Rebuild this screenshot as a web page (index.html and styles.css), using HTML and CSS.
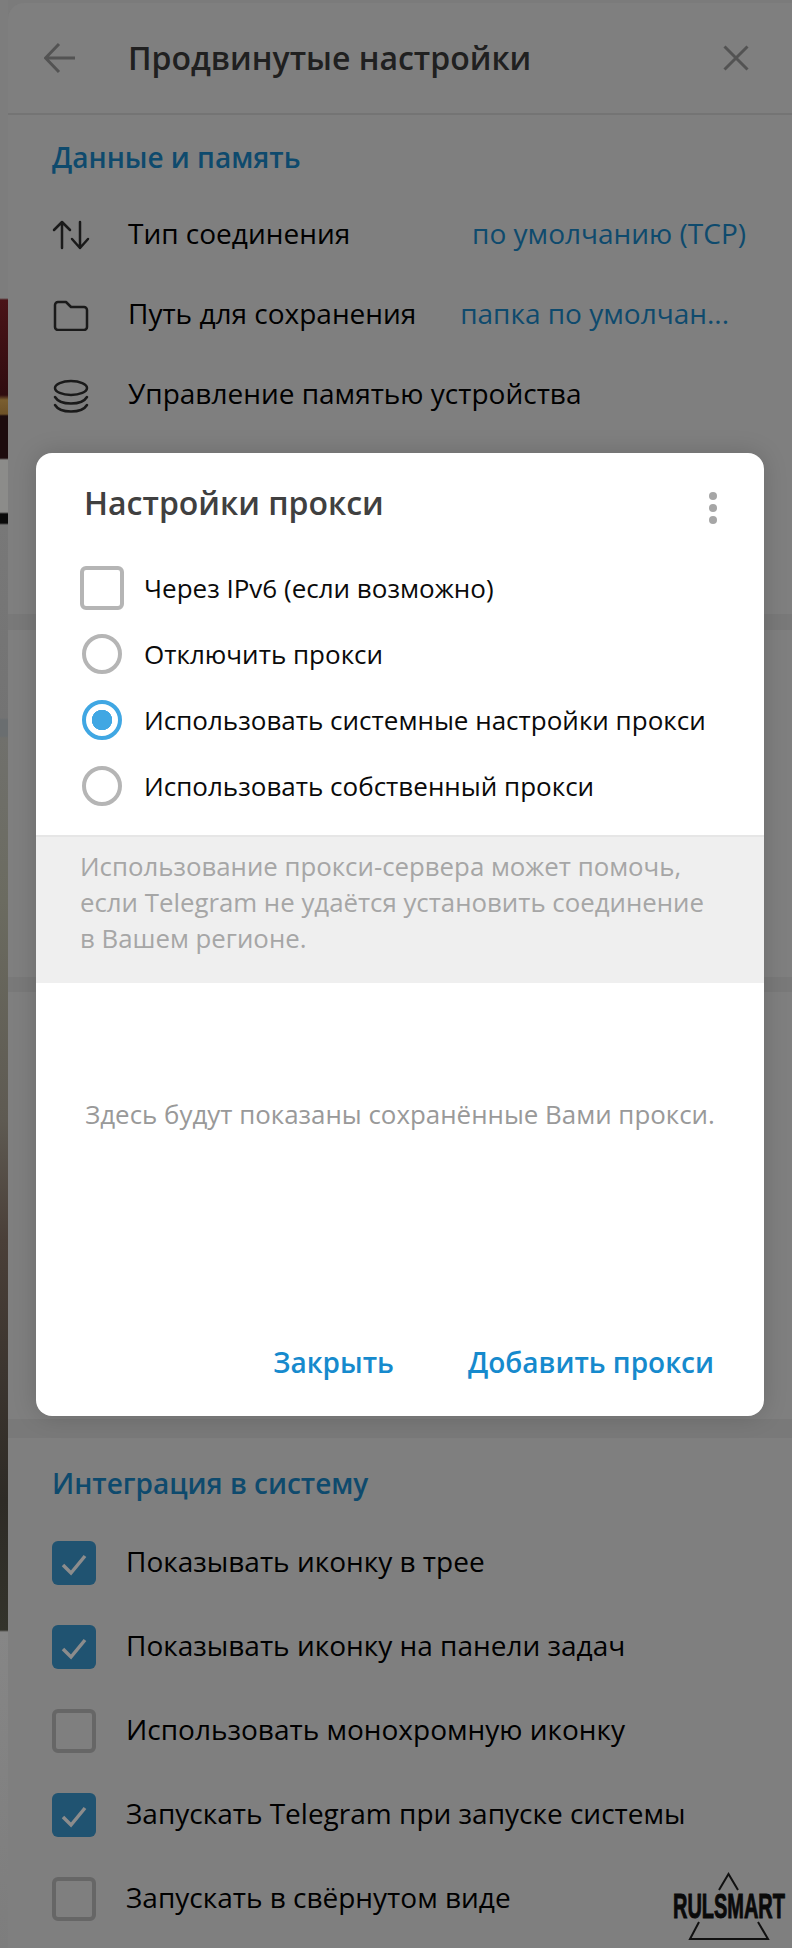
FILE: index.html
```html
<!DOCTYPE html>
<html lang="ru">
<head>
  <meta charset="UTF-8" />
  <meta name="viewport" content="width=device-width, initial-scale=1" />
  <title>Настройки прокси</title>
  <link rel="stylesheet" href="styles.css">
</head>
<body>

  <!-- Полоска окна за панелью -->
  <div class="tira-fondo"></div>

  <div class="panel">
    <header class="panel-cabecera">
      <svg class="icono-atras" width="32" height="32" viewBox="0 0 32 32"><path d="M31 16H2M15 2 1.5 16 15 30" /></svg>
      <h1>Продвинутые настройки</h1>
      <svg class="icono-cerrar" width="26" height="26" viewBox="0 0 26 26"><path d="M1.5 1.5l23 23M24.5 1.5l-23 23" /></svg>
    </header>

    <section class="seccion seccion-datos">
      <h2>Данные и память</h2>
      <div class="fila">
        <svg class="icono" width="38" height="30" viewBox="0 0 38 30"><path d="M10 28V2M2 10l8-8 8 8M28 2v26M20 19l8 9 8-9" /></svg>
        <span class="etiqueta">Тип соединения</span>
        <span class="etiqueta valor">по умолчанию (TCP)</span>
      </div>
      <div class="fila">
        <svg class="icono" width="38" height="32" viewBox="0 0 38 32"><path d="M3 6a3 3 0 0 1 3-3h8l5 5h13a3 3 0 0 1 3 3v17a3 3 0 0 1-3 3H6a3 3 0 0 1-3-3z" /></svg>
        <span class="etiqueta">Путь для сохранения</span>
        <span class="etiqueta valor valor-corto">папка по умолчан...</span>
      </div>
      <div class="fila">
        <svg class="icono" width="38" height="36" viewBox="0 0 38 36"><ellipse cx="19" cy="11" rx="16" ry="7" /><path d="M3 20c3 5 9 6.500 16 6.500S32 25 35 20M3 28c3 5 9 6.500 16 6.500S32 33 35 28" /></svg>
        <span class="etiqueta">Управление памятью устройства</span>
      </div>
    </section>
    <div class="separador"></div>
    <section class="seccion seccion-medio"></section>
    <div class="separador separador-2"></div>
    <section class="seccion seccion-oculta"></section>
    <div class="separador separador-3"></div>

    <section class="seccion seccion-sistema">
      <h2>Интеграция в систему</h2>
      <div class="fila-check">
        <span class="check activo"><svg width="44" height="44" viewBox="0 0 44 44"><path d="M11 24l8 8 14-17" /></svg></span>
        <span class="etiqueta">Показывать иконку в трее</span>
      </div>
      <div class="fila-check">
        <span class="check activo"><svg width="44" height="44" viewBox="0 0 44 44"><path d="M11 24l8 8 14-17" /></svg></span>
        <span class="etiqueta">Показывать иконку на панели задач</span>
      </div>
      <div class="fila-check">
        <span class="check"></span>
        <span class="etiqueta">Использовать монохромную иконку</span>
      </div>
      <div class="fila-check">
        <span class="check activo"><svg width="44" height="44" viewBox="0 0 44 44"><path d="M11 24l8 8 14-17" /></svg></span>
        <span class="etiqueta">Запускать Telegram при запуске системы</span>
      </div>
      <div class="fila-check">
        <span class="check"></span>
        <span class="etiqueta">Запускать в свёрнутом виде</span>
      </div>
    </section>
  </div>

  <!-- Ventana de proxy -->
  <div class="modal">
    <div class="modal-cabecera">
      <h3>Настройки прокси</h3>
      <div class="puntos"><i></i><i></i><i></i></div>
    </div>
    <div class="opciones">
      <div class="opcion"><span class="caja"></span>Через IPv6 (если возможно)</div>
      <div class="opcion"><span class="radio"></span>Отключить прокси</div>
      <div class="opcion"><span class="radio marcado"></span>Использовать системные настройки прокси</div>
      <div class="opcion"><span class="radio"></span>Использовать собственный прокси</div>
    </div>
    <p class="aviso">Использование прокси-сервера может помочь, если Telegram не удаётся установить соединение в Вашем регионе.</p>
    <div class="vacio">Здесь будут показаны сохранённые Вами прокси.</div>
    <div class="modal-pie">
      <span class="boton">Закрыть</span>
      <span class="boton">Добавить прокси</span>
    </div>
  </div>

  <!-- Marca de agua -->
  <div class="marca">
    <svg width="112" height="70" viewBox="0 0 112 70"><path d="M46 18 55.500 2 65 18M26 50 17 67H95L85 50" /></svg>
    <span>RULSMART</span>
  </div>

</body>
</html>
```

FILE: styles.css
```css
:root {
  --color-panel: #7f7f7f;
  --color-banda: #797979;
  --color-azul-titulo: #0e4a6d;
  --color-azul-check: #205371;
  --color-azul: #168acd;
  --color-radio: #b5b5b5;
}

* {
  margin: 0;
  padding: 0;
  box-sizing: border-box;
}

body {
  font-family: 'Open Sans', sans-serif;
  font-size: 26px;
  color: #000;
  width: 792px;
  height: 1948px;
  overflow: hidden;
  position: relative;
  display: flex;
  background: #7b7b7b;
}

.tira-fondo {
  width: 8px;
  flex-shrink: 0;
  background: linear-gradient(to bottom,
    #7d7d7d 0, #7d7d7d 298px,
    #4a1418 300px, #300c10 395px,
    #7a5e30 400px, #6e5228 414px,
    #1d0c0e 416px, #1d0c0e 458px,
    #8c8c8a 460px, #8c8c8a 512px,
    #0a0a0a 514px, #0a0a0a 523px,
    #787878 525px, #737373 718px,
    #6a6e70 720px, #6a6e70 736px,
    #70706c 738px, #6b6b60 900px,
    #5e5a52 1120px, #4a3f38 1240px,
    #2e2b26 1500px, #33332b 1630px,
    #868686 1632px, #7d7d7d 1948px);
}

.panel {
  flex: 1;
  margin-top: 3px;
  font-size: 28px;
  background: var(--color-panel);
  border-top-left-radius: 16px;
  display: flex;
  flex-direction: column;
}

.panel-cabecera {
  height: 112px;
  flex-shrink: 0;
  display: flex;
  align-items: center;
  padding-left: 36px;
  border-bottom: 2px solid #747474;
}

.panel-cabecera h1 {
  font-size: 32px;
  font-weight: 600;
  color: #202020;
  margin: 0 0 2px 52px;
}

.icono-atras,
.icono-cerrar {
  fill: none;
  stroke: #535353;
  stroke-width: 3;
}

.icono-cerrar {
  margin-left: auto;
  margin-right: 43px;
}

.seccion h2 {
  font-size: 28px;
  font-weight: 600;
  color: var(--color-azul-titulo);
  height: 36px;
  line-height: 36px;
  margin: 24px 0 20px 44px;
}

.seccion-datos {
  height: 499px;
}

.seccion-medio {
  height: 347px;
}

.seccion-oculta {
  height: 427px;
}

.separador {
  height: 16px;
  flex-shrink: 0;
  background: var(--color-banda);
}

.separador-2 {
  height: 15px;
}

.separador-3 {
  height: 19px;
}

.fila {
  height: 80px;
  display: flex;
  align-items: center;
  padding: 0 46px 0 44px;
}

.icono {
  width: 38px;
  flex-shrink: 0;
  margin-right: 38px;
  fill: none;
  stroke: #1a1a1a;
  stroke-width: 2.5;
  stroke-linecap: round;
  stroke-linejoin: round;
}

.etiqueta {
  margin-bottom: 4px;
}

.valor {
  margin-left: auto;
  color: var(--color-azul-titulo);
}

.valor-corto {
  margin-right: 17px;
}

.seccion-sistema h2 {
  margin: 27px 0 20px 44px;
}

.fila-check {
  height: 84px;
  display: flex;
  align-items: center;
  gap: 30px;
  padding-left: 44px;
}

.check {
  width: 44px;
  height: 44px;
  flex-shrink: 0;
  border: 4px solid #666;
  border-radius: 6px;
}

.check.activo {
  border: none;
  background: var(--color-azul-check);
}

.check svg {
  display: block;
  fill: none;
  stroke: #8c8c8c;
  stroke-width: 3.5;
}

.modal {
  position: absolute;
  left: 36px;
  top: 453px;
  width: 728px;
  height: 963px;
  background: #fff;
  border-radius: 16px;
  box-shadow: 0 0 24px rgba(0, 0, 0, 0.16);
  display: flex;
  flex-direction: column;
  overflow: hidden;
}

.modal-cabecera {
  height: 102px;
  flex-shrink: 0;
  display: flex;
  align-items: center;
  justify-content: space-between;
  padding: 0 47px 4px 48px;
}

.modal-cabecera h3 {
  font-size: 32px;
  font-weight: 600;
  color: #404040;
}

.puntos {
  display: flex;
  flex-direction: column;
  gap: 4px;
  margin-top: 12px;
}

.puntos i {
  width: 8px;
  height: 8px;
  border-radius: 50%;
  background: #a6a6a6;
}

.opciones {
  flex-shrink: 0;
  padding: 0 44px 16px;
}

.opcion {
  height: 66px;
  display: flex;
  align-items: center;
  color: #0a0a0a;
}

.caja {
  width: 44px;
  height: 44px;
  flex-shrink: 0;
  margin-right: 20px;
  border: 4px solid var(--color-radio);
  border-radius: 6px;
}

.radio {
  width: 40px;
  height: 40px;
  flex-shrink: 0;
  margin: 0 22px 0 2px;
  border: 4px solid var(--color-radio);
  border-radius: 50%;
}

.radio.marcado {
  border-color: #40a7e3;
  background: radial-gradient(circle, #40a7e3 0, #40a7e3 10px, #fff 10.500px);
}

.aviso {
  height: 148px;
  flex-shrink: 0;
  padding: 11px 44px 0;
  background: #efefef;
  border-top: 2px solid #e6e6e6;
  color: #a6a6a6;
  font-size: 25.800px;
  line-height: 36px;
}

.vacio {
  height: 262px;
  flex-shrink: 0;
  display: flex;
  align-items: center;
  justify-content: center;
  color: #999;
  font-size: 25.900px;
}

.modal-pie {
  flex: 1;
  display: flex;
  align-items: flex-end;
  justify-content: flex-end;
  gap: 74px;
  padding: 0 50px 37px 0;
}

.boton {
  font-size: 28px;
  font-weight: 600;
  line-height: 34px;
  color: var(--color-azul);
}

.marca {
  position: absolute;
  left: 673px;
  top: 1872px;
  width: 112px;
  height: 70px;
}

.marca svg {
  display: block;
  fill: none;
  stroke: #111;
  stroke-width: 2;
}

.marca span {
  position: absolute;
  left: 0;
  top: 16px;
  width: 112px;
  font-family: 'Liberation Sans', sans-serif;
  font-size: 35px;
  font-weight: 700;
  line-height: 35px;
  color: #0a0a0a;
  -webkit-text-stroke: 1px #0a0a0a;
  transform: scaleX(0.57);
  transform-origin: left center;
  white-space: nowrap;
}
```
